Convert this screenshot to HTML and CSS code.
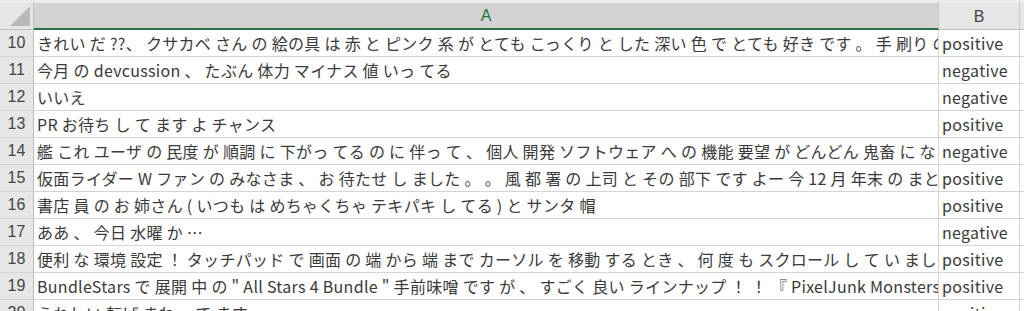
FILE: index.html
```html
<!DOCTYPE html>
<html lang="ja">
<head>
    <meta charset="UTF-8">
    <title>Sheet1</title>
    <link rel="stylesheet" href="styles.css">
</head>
<body>
    <div class="sheet">
        <div class="corner"><span class="tri"></span></div>
        <div class="col-head selected">A</div>
        <div class="col-head">B</div>
        <div class="col-head"></div>

        <div class="row-head">10</div>
        <div class="cell">きれい だ ??、 クサカベ さん の 絵の具 は 赤 と ピンク 系 が とても こっくり と した 深い 色 で とても 好き です 。 手 刷り の 風合い も 素敵 です</div>
        <div class="cell">positive</div>
        <div class="cell"></div>

        <div class="row-head">11</div>
        <div class="cell">今月 の devcussion 、 たぶん 体力 マイナス 値 いっ てる</div>
        <div class="cell">negative</div>
        <div class="cell"></div>

        <div class="row-head">12</div>
        <div class="cell">いいえ</div>
        <div class="cell">negative</div>
        <div class="cell"></div>

        <div class="row-head">13</div>
        <div class="cell">PR お待ち し て ます よ チャンス</div>
        <div class="cell">positive</div>
        <div class="cell"></div>

        <div class="row-head">14</div>
        <div class="cell">艦 これ ユーザ の 民度 が 順調 に 下がっ てる の に 伴っ て 、 個人 開発 ソフトウェア へ の 機能 要望 が どんどん 鬼畜 に なっ て いく</div>
        <div class="cell">negative</div>
        <div class="cell"></div>

        <div class="row-head">15</div>
        <div class="cell">仮面ライダー W ファン の みなさま 、 お 待たせ し ました 。 。 風 都 署 の 上司 と その 部下 です よー 今 12 月 年末 の まとめ</div>
        <div class="cell">positive</div>
        <div class="cell"></div>

        <div class="row-head">16</div>
        <div class="cell">書店 員 の お 姉さん ( いつも は めちゃくちゃ テキパキ し てる ) と サンタ 帽</div>
        <div class="cell">positive</div>
        <div class="cell"></div>

        <div class="row-head">17</div>
        <div class="cell">ああ 、 今日 水曜 か …</div>
        <div class="cell">negative</div>
        <div class="cell"></div>

        <div class="row-head">18</div>
        <div class="cell">便利 な 環境 設定 ！ タッチパッド で 画面 の 端 から 端 まで カーソル を 移動 する とき 、 何 度 も スクロール し て い まし た</div>
        <div class="cell">positive</div>
        <div class="cell"></div>

        <div class="row-head">19</div>
        <div class="cell">BundleStars で 展開 中 の " All Stars 4 Bundle " 手前味噌 です が 、 すごく 良い ラインナップ ！ ！ 『 PixelJunk Monsters 』</div>
        <div class="cell">positive</div>
        <div class="cell"></div>

        <div class="row-head">20</div>
        <div class="cell">うれしい 転げ まわっ て ます</div>
        <div class="cell">positive</div>
        <div class="cell"></div>
    </div>
</body>
</html>
```

FILE: styles.css
```css
html, body { margin: 0; height: 100%; overflow: hidden; background: #fff; }

.sheet {
    display: grid;
    grid-template-columns: 34px 905px 81px 1fr;
    grid-auto-rows: 27px;
    grid-template-rows: 30px;
    font-family: "Noto Sans CJK JP", "Noto Sans", sans-serif;
    font-size: 16px;
    letter-spacing: 0.3px;
    color: #3a3a3a;
}

.corner {
    background: #e6e6e6;
    border-top: 3px solid #ececec;
    border-right: 1px solid #bdbdbd;
    border-bottom: 1px solid #bdbdbd;
    box-sizing: border-box;
    position: relative;
}

.corner .tri {
    position: absolute;
    right: 3px;
    bottom: 3px;
    width: 0;
    height: 0;
    border-left: 20px solid transparent;
    border-bottom: 20px solid #b8b8b8;
}

.col-head {
    background: #e6e6e6;
    border-top: 3px solid #ececec;
    border-right: 1px solid #c8c8c8;
    border-bottom: 1px solid #bdbdbd;
    box-sizing: border-box;
    display: flex;
    align-items: center;
    justify-content: center;
    font-family: "Liberation Sans", sans-serif;
    font-size: 16px;
    letter-spacing: 0;
    color: #444;
    padding-top: 1px;
}

.col-head.selected {
    background: #d2d2d2;
    color: #217346;
    border-bottom: 2px solid #217346;
}

.row-head {
    background: #e6e6e6;
    border-right: 1px solid #bdbdbd;
    border-bottom: 1px solid #d4d4d4;
    box-sizing: border-box;
    display: flex;
    align-items: center;
    justify-content: center;
    font-family: "Liberation Sans", sans-serif;
    font-size: 16px;
    letter-spacing: 0;
    color: #444;
}

.cell {
    border-right: 1px solid #d4d4d4;
    border-bottom: 1px solid #d4d4d4;
    box-sizing: border-box;
    padding: 0 3px;
    white-space: nowrap;
    overflow: hidden;
    display: flex;
    align-items: center;
}
```
